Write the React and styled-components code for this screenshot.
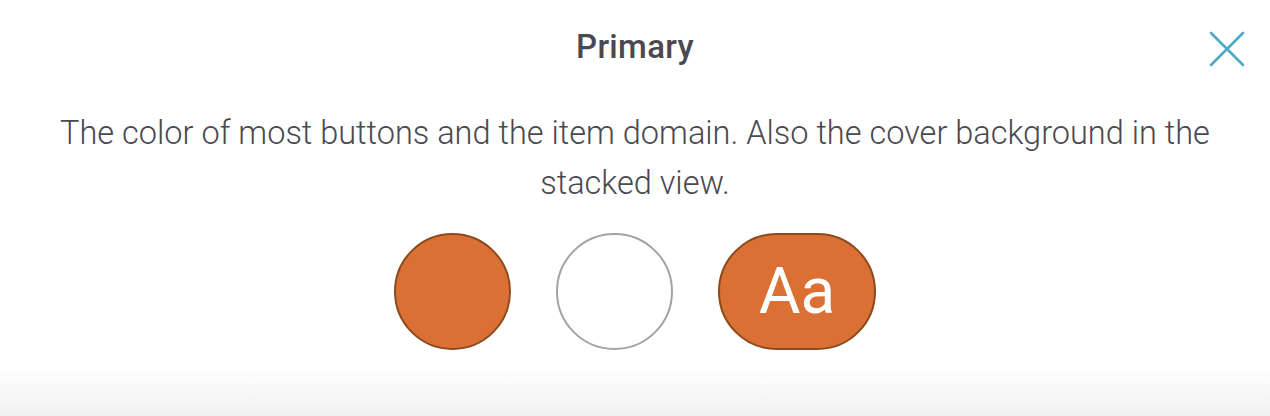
import React from "react";
import styled, { createGlobalStyle } from "styled-components";

const GlobalStyle = createGlobalStyle`
  html, body {
    margin: 0;
    padding: 0;
    background: #ffffff;
  }
  body {
    font-family: Roboto, "Liberation Sans", sans-serif;
  }
`;

const Panel = styled.section`
  position: relative;
  width: 1270px;
  height: 416px;
  box-sizing: border-box;
  display: flex;
  flex-direction: column;
  align-items: center;
  padding-top: 26px;
  background: linear-gradient(
    to bottom,
    #ffffff 0px,
    #ffffff 366px,
    #f1f1f1 416px
  );
  overflow: hidden;
`;

const Title = styled.h2`
  margin: 0;
  font-family: Roboto, "Liberation Sans", sans-serif;
  font-weight: 500;
  font-size: 33px;
  letter-spacing: 0.3px;
  line-height: 42px;
  color: #4a4950;
`;

const CloseButton = styled.button`
  position: absolute;
  top: 30px;
  right: 24px;
  width: 38px;
  height: 38px;
  padding: 0;
  border: none;
  background: none;
  cursor: pointer;
  display: flex;
  align-items: center;
  justify-content: center;
`;

const Description = styled.p`
  margin: 40px 0 0;
  max-width: 1180px;
  text-align: center;
  font-family: Roboto, "Liberation Sans", sans-serif;
  font-weight: 300;
  font-size: 32.5px;
  line-height: 50px;
  color: #4a4950;
`;

const Swatches = styled.div`
  display: flex;
  align-items: center;
  gap: 45px;
  margin-top: 25px;
`;

const Swatch = styled.div`
  box-sizing: border-box;
  width: ${(p) => (p.$wide ? "158px" : "117px")};
  height: 117px;
  border-radius: 59px;
  background: ${(p) => p.$fill};
  border: 2px solid ${(p) => p.$border};
  display: flex;
  align-items: center;
  justify-content: center;
  color: #ffffff;
  font-family: Roboto, "Liberation Sans", sans-serif;
  font-size: 64px;
  font-weight: 400;
  line-height: 1;
`;

export default function App() {
  return (
    <>
      <GlobalStyle />
      <Panel>
        <Title>Primary</Title>
        <CloseButton aria-label="Close">
          <svg width="36" height="36" viewBox="0 0 36 36">
            <path
              d="M2 2 L34 34 M34 2 L2 34"
              stroke="#4ea9c9"
              strokeWidth="2.6"
              strokeLinecap="round"
              fill="none"
            />
          </svg>
        </CloseButton>
        <Description>
          The color of most buttons and the item domain. Also the cover
          background in the stacked view.
        </Description>
        <Swatches>
          <Swatch $fill="#db7034" $border="#8b4a1e" />
          <Swatch $fill="#ffffff" $border="#a3a3a3" />
          <Swatch $wide $fill="#db7034" $border="#8b4a1e">
            Aa
          </Swatch>
        </Swatches>
      </Panel>
    </>
  );
}
